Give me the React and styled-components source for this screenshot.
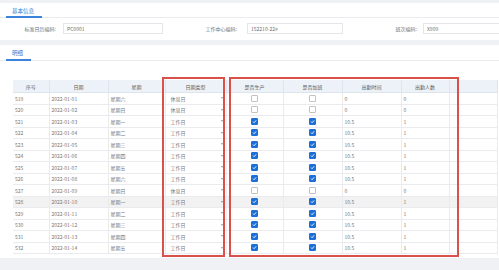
import React from "react";
import styled, { createGlobalStyle } from "styled-components";

const GlobalStyle = createGlobalStyle`
  html, body {
    margin: 0;
    padding: 0;
    background: #eff1f4;
  }
  body {
    width: 499px;
    height: 270px;
    overflow: hidden;
    font-family: "Noto Sans CJK SC", "Noto Sans", sans-serif;
  }
`;

const Page = styled.div`
  padding-top: 3px;
`;

const Card = styled.section`
  background: #fff;
  margin-bottom: 5px;
`;

const TabBar = styled.div`
  height: ${(p) => p.h}px;
  box-sizing: border-box;
  border-bottom: 1px solid #e9ebef;
  padding-left: 6px;
  display: flex;
  align-items: stretch;
`;

const Tab = styled.div`
  display: flex;
  align-items: center;
  box-sizing: border-box;
  padding: 2px 8px 0 6px;
  margin-bottom: -1px;
  font-size: 5.5px;
  color: #2f78d2;
  border-bottom: 2px solid #3b82db;
`;

const FormRow = styled.div`
  display: flex;
  padding: 5px 0 6px;
`;

const Field = styled.div`
  display: flex;
  align-items: center;
  height: 11px;
`;

const Label = styled.span`
  width: ${(p) => p.w}px;
  margin-right: ${(p) => p.gap}px;
  text-align: right;
  font-size: 5px;
  color: #6e6e6e;
  white-space: nowrap;
`;

const Input = styled.div`
  width: ${(p) => p.w}px;
  height: 11px;
  box-sizing: border-box;
  border: 1px solid #e4e6ea;
  padding-left: 3px;
  display: flex;
  align-items: center;
  font-size: 5px;
  color: #6e6e6e;
`;

const TableWrap = styled.div`
  position: relative;
  margin: 19px 2px 0 13px;
  padding-bottom: 4px;
`;

const Table = styled.table`
  width: 484px;
  table-layout: fixed;
  border-collapse: collapse;
`;

const Th = styled.th`
  height: 12px;
  padding: 0;
  background: #edf2f8;
  border-right: 1px solid #dfe5ec;
  border-bottom: 1px solid #dfe5ec;
  font-size: 5px;
  font-weight: normal;
  color: #5a5a5a;
  text-align: center;
`;

const Tr = styled.tr`
  background: ${(p) => (p.active ? "#f2f2f3" : "#fff")};
`;

const Td = styled.td`
  height: 10.5px;
  padding: 0 2px;
  border-right: 1px solid #e9ebee;
  border-bottom: 1px solid #e9ebee;
  font-size: 5px;
  color: #757575;
  text-align: ${(p) => (p.center ? "center" : "left")};
  white-space: nowrap;
  line-height: 1;
`;

const Select = styled.div`
  display: flex;
  align-items: center;
  justify-content: space-between;
  padding: 0 1px 0 3px;
`;

const Caret = styled.span`
  width: 0;
  height: 0;
  border-left: 1.5px solid transparent;
  border-right: 1.5px solid transparent;
  border-top: 2px solid #999;
`;

const Box = styled.span`
  display: inline-block;
  vertical-align: middle;
  width: 7px;
  height: 7px;
  box-sizing: border-box;
  border-radius: 1px;
  border: 1px solid ${(p) => (p.checked ? "#1c6fd6" : "#c2c2c2")};
  background: ${(p) => (p.checked ? "#1c6fd6" : "#fff")};
  position: relative;
  svg {
    position: absolute;
    left: 0;
    top: 0;
  }
`;

const Mark = styled.div`
  position: absolute;
  top: -3px;
  left: ${(p) => p.left}px;
  width: ${(p) => p.w}px;
  height: 180px;
  box-sizing: border-box;
  border: 2px solid #d8514a;
  pointer-events: none;
`;

const Checkbox = ({ checked }) => (
  <Box checked={checked}>
    {checked && (
      <svg width="5" height="5" viewBox="0 0 10 10">
        <path d="M2 5.2 L4.2 7.4 L8.2 2.8" fill="none" stroke="#fff" strokeWidth="1.8" />
      </svg>
    )}
  </Box>
);

const weekNames = ["星期六", "星期日", "星期一", "星期二", "星期三", "星期四", "星期五"];
const restRows = [519, 520, 527];

const rows = Array.from({ length: 14 }, (_, i) => {
  const no = 519 + i;
  const rest = restRows.includes(no);
  return {
    no,
    date: `2022-01-${String(i + 1).padStart(2, "0")}`,
    week: weekNames[i % 7],
    type: rest ? "休息日" : "工作日",
    work: !rest,
    hours: rest ? "0" : "10.5",
    people: rest ? "0" : "1",
  };
});

const cols = [36, 59, 57, 61, 57, 59, 59, 48, 48];
const heads = ["序号", "日期", "星期", "日期类型", "是否生产", "是否加班", "出勤时间", "出勤人数", ""];

export default function App() {
  return (
    <Page>
      <GlobalStyle />
      <Card>
        <TabBar h={15}>
          <Tab>基本信息</Tab>
        </TabBar>
        <FormRow>
          <Field>
            <Label w={56} gap={7}>标准日历编码:</Label>
            <Input w={100}>PC0001</Input>
          </Field>
          <Field>
            <Label w={74} gap={10}>工作中心编码:</Label>
            <Input w={96}>152210-22#</Input>
          </Field>
          <Field>
            <Label w={74} gap={6}>班次编码:</Label>
            <Input w={80}>X909</Input>
          </Field>
        </FormRow>
      </Card>
      <Card>
        <TabBar h={16}>
          <Tab>明细</Tab>
        </TabBar>
        <TableWrap>
          <Table>
            <colgroup>
              {cols.map((w, i) => (
                <col key={i} style={{ width: w }} />
              ))}
            </colgroup>
            <thead>
              <tr>
                {heads.map((h, i) => (
                  <Th key={i}>{h}</Th>
                ))}
              </tr>
            </thead>
            <tbody>
              {rows.map((r) => (
                <Tr key={r.no} active={r.no === 528}>
                  <Td>{r.no}</Td>
                  <Td>{r.date}</Td>
                  <Td>{r.week}</Td>
                  <Td>
                    <Select>
                      {r.type}
                      <Caret />
                    </Select>
                  </Td>
                  <Td center>
                    <Checkbox checked={r.work} />
                  </Td>
                  <Td center>
                    <Checkbox checked={r.work} />
                  </Td>
                  <Td>{r.hours}</Td>
                  <Td>{r.people}</Td>
                  <Td />
                </Tr>
              ))}
            </tbody>
          </Table>
          <Mark left={149} w={63} />
          <Mark left={216} w={230} />
        </TableWrap>
      </Card>
    </Page>
  );
}
